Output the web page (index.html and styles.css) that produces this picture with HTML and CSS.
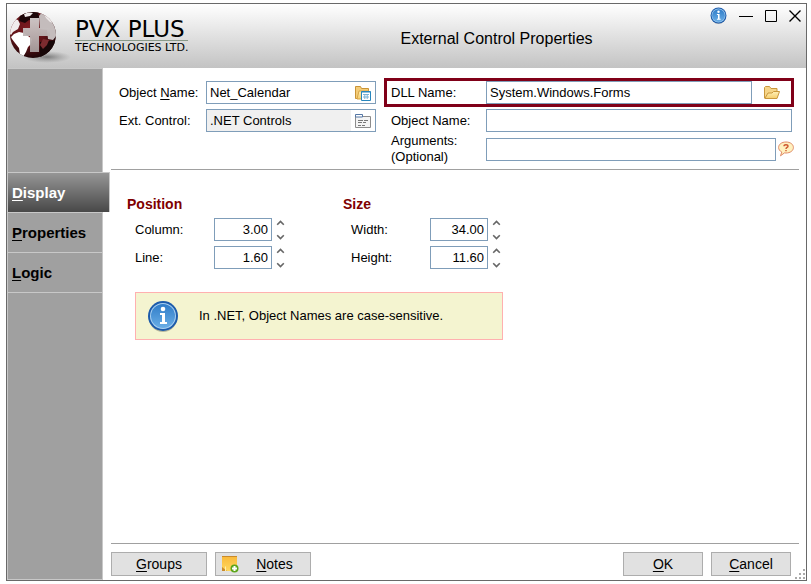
FILE: index.html
```html
<!DOCTYPE html>
<html lang="en">
<head>
  <meta charset="UTF-8">
  <meta name="viewport" content="width=device-width, initial-scale=1.0">
  <title>External Control Properties</title>
  <link rel="stylesheet" href="styles.css">
</head>
<body>
  <!-- Shared icon shapes -->
  <svg class="defs" width="0" height="0" aria-hidden="true">
    <defs>
      <linearGradient id="blue" x1="0" y1="0" x2="0" y2="1">
        <stop offset="0" stop-color="#2f7cc8"/>
        <stop offset="1" stop-color="#6aaee6"/>
      </linearGradient>
      <linearGradient id="gold" x1="0" y1="0" x2="0" y2="1">
        <stop offset="0" stop-color="#fff0b8"/>
        <stop offset="1" stop-color="#f5cd6c"/>
      </linearGradient>
      <linearGradient id="note" x1="0" y1="0" x2="0" y2="1">
        <stop offset="0" stop-color="#f9b93a"/>
        <stop offset="1" stop-color="#ffd75e"/>
      </linearGradient>
      <radialGradient id="sphere" cx="0.4" cy="0.35" r="0.65">
        <stop offset="0" stop-color="#7d1c21"/>
        <stop offset="0.6" stop-color="#5f1217"/>
        <stop offset="1" stop-color="#200507"/>
      </radialGradient>
      <radialGradient id="shadow">
        <stop offset="0" stop-color="#666" stop-opacity="0.8"/>
        <stop offset="1" stop-color="#888" stop-opacity="0"/>
      </radialGradient>
      <linearGradient id="cross" x1="0" y1="0" x2="0" y2="1">
        <stop offset="0" stop-color="#d2cccc"/>
        <stop offset="1" stop-color="#a79c9c"/>
      </linearGradient>
      <clipPath id="globe"><circle cx="26" cy="29" r="23"/></clipPath>
      <symbol id="info" viewBox="0 0 32 32">
        <ellipse cx="16" cy="18" rx="14" ry="14" fill="#000" opacity="0.25"/>
        <circle cx="16" cy="16" r="15" fill="#1c5bab"/>
        <circle cx="16" cy="16" r="13" fill="#a9d1f2"/>
        <circle cx="16" cy="16" r="12" fill="url(#blue)"/>
        <circle cx="16" cy="9" r="2.3" fill="#fff"/>
        <path d="M13 13h5v9h2v2h-7v-2h2v-7h-2z" fill="#fff"/>
      </symbol>
      <symbol id="up" viewBox="0 0 9 6"><path d="M1.2 4.8l3.3-3.3 3.3 3.3" fill="none" stroke="#666" stroke-width="1.6"/></symbol>
      <symbol id="down" viewBox="0 0 9 6"><path d="M1.2 1.2l3.3 3.3 3.3-3.3" fill="none" stroke="#666" stroke-width="1.6"/></symbol>
    </defs>
  </svg>

  <div class="window">
    <header class="titlebar">
      <div class="logo">
        <svg width="64" height="60" viewBox="0 0 64 60" aria-hidden="true">
          <ellipse cx="40" cy="51" rx="24" ry="6" fill="url(#shadow)"/>
          <circle cx="26" cy="29" r="23" fill="url(#sphere)"/>
          <g clip-path="url(#globe)">
            <path d="M13 9l6-4 9-2 7 2-4 3 2 4-5 3-6-1-4 3-6-2z" fill="#1c0608"/>
            <path d="M17 8l4-2 5 1-3 3-5 1zM4 19l4-6 3 1 2 4-2 5-5 3-2 3-3-3z" fill="#f0ecec"/>
            <path d="M7 28l5-2 5 1 4 3 4 3-1 5-3 3-2 5-3 5-3-2-1-7-4-5-3-4-1-2z" fill="#fff"/>
            <path d="M32 10l4-5 5 1 6 7 3 9 0 7-4 5-5-1-1-9-7-1z" fill="#c4bcbc"/>
            <path d="M37 8l5 2 5 7-4-1-4-4z" fill="#efebeb"/>
            <path d="M33 36l9-1 7 0-3 8-6 6-7 3z" fill="#170708"/>
            <path d="M36 33l6 1-2 5-4 4-3-4z" fill="#7c2b2f"/>
          </g>
          <path d="M23 12h9v10h11v8H32v16h-9V30h-7v-8h7z" fill="url(#cross)" opacity="0.95"/>
        </svg>
        <div class="brand">
          <span class="brand-name">PVX PLUS</span>
          <span class="brand-sub">TECHNOLOGIES LTD.</span>
        </div>
      </div>
      <h1>External Control Properties</h1>
      <div class="controls">
        <button type="button" aria-label="Information"><svg width="17" height="17"><use href="#info"/></svg></button>
        <button type="button" aria-label="Minimize"><svg width="14" height="14" viewBox="0 0 14 14"><path d="M0 7.5h14" stroke="#000"/></svg></button>
        <button type="button" aria-label="Maximize"><svg width="12" height="12" viewBox="0 0 12 12"><path d="M.5.5h11v11H.5z" fill="none" stroke="#000"/></svg></button>
        <button type="button" aria-label="Close"><svg width="12" height="12" viewBox="0 0 12 12"><path d="M.5.5l11 11M11.5.5l-11 11" stroke="#000" stroke-width="1.4"/></svg></button>
      </div>
    </header>

    <div class="body">
      <nav class="tabs">
        <a href="#display" class="active"><u>D</u>isplay</a>
        <a href="#properties"><u>P</u>roperties</a>
        <a href="#logic"><u>L</u>ogic</a>
      </nav>

      <form class="content">
        <div class="names">
          <div class="names-left">
            <div class="row">
              <label for="objectName">Object <u>N</u>ame:</label>
              <div class="field">
                <input type="text" id="objectName" value="Net_Calendar">
                <button type="button" aria-label="Browse objects">
                  <svg width="16" height="16" viewBox="0 0 16 16"><path d="M.5 13.5v-12h5l1 2h7v10z" fill="#f3cc78" stroke="#c99336"/><path d="M2 14l2-8h10v8z" fill="url(#gold)" stroke="#d7a547"/><path d="M6.5 6.5h9v9h-9z" fill="#fff" stroke="#2786bd"/><path d="M6.5 7h9" stroke="#2786bd"/><path d="M8 9.5h6M8 12h6M9.8 9v5M12.2 9v5" stroke="#7bb3d5" fill="none"/></svg>
                </button>
              </div>
            </div>
            <div class="row">
              <label for="extControl">Ext. Control:</label>
              <div class="field">
                <input type="text" id="extControl" value=".NET Controls" readonly>
                <button type="button" aria-label="Choose control">
                  <svg width="16" height="16" viewBox="0 0 16 16"><path d="M.5 3.5h15v11H.5z" fill="#f4f4f4" stroke="#8c8c8c"/><path d="M.5 1.5h7v2.5h-7z" fill="#fff" stroke="#5577a5"/><path d="M3 7.5h5M9 7.5h4M3 9.5h4M8 9.5h3M3 12.5h3M7 12.5h3" stroke="#777"/></svg>
                </button>
              </div>
            </div>
          </div>

          <div class="names-right">
            <div class="row highlight">
              <label for="dllName">DLL Name:</label>
              <input type="text" id="dllName" class="box" value="System.Windows.Forms">
              <button type="button" aria-label="Browse DLL">
                <svg width="16" height="13" viewBox="0 0 16 13"><path d="M.5 12V1.5l1-1h4l1.5 2h6v3" fill="#f6d588" stroke="#c9973d"/><path d="M.8 12.5L4 7h4l1.5-1.5h6L13 12.5z" fill="url(#gold)" stroke="#c9973d"/></svg>
              </button>
            </div>
            <div class="row second">
              <label for="netObject">Object Name:</label>
              <input type="text" id="netObject" class="box">
            </div>
            <div class="row third">
              <label for="arguments">Arguments:<br>(Optional)</label>
              <input type="text" id="arguments" class="box">
              <button type="button" class="help" aria-label="Help">
                <svg width="16" height="16" viewBox="0 0 16 16"><path d="M8 1c4.3 0 7.4 2.3 7.4 5.5S12.3 12 8 12c-.6 0-1 0-1.5-.1L2.5 14.8 3.8 11C1.7 10 .6 8.4.6 6.5.6 3.3 3.7 1 8 1z" fill="#fff1bf" stroke="#e08a66"/><path d="M6 5.300c0-1 .8-1.600 2-1.600s2 .6 2 1.500c0 1.200-2 1.300-2 2.700M8 9v1.300" fill="none" stroke="#cf5730" stroke-width="1.400"/></svg>
              </button>
            </div>
          </div>
        </div>

        <div class="panel">
          <div class="groups">
            <section>
              <h2>Position</h2>
              <div class="row">
                <label for="column">Column:</label>
                <input type="text" id="column" class="box" value="3.00">
                <div class="spin">
                  <button type="button" aria-label="Column up"><svg width="9" height="6"><use href="#up"/></svg></button>
                  <button type="button" aria-label="Column down"><svg width="9" height="6"><use href="#down"/></svg></button>
                </div>
              </div>
              <div class="row">
                <label for="line">Line:</label>
                <input type="text" id="line" class="box" value="1.60">
                <div class="spin">
                  <button type="button" aria-label="Line up"><svg width="9" height="6"><use href="#up"/></svg></button>
                  <button type="button" aria-label="Line down"><svg width="9" height="6"><use href="#down"/></svg></button>
                </div>
              </div>
            </section>
            <section>
              <h2>Size</h2>
              <div class="row">
                <label for="width">Width:</label>
                <input type="text" id="width" class="box" value="34.00">
                <div class="spin">
                  <button type="button" aria-label="Width up"><svg width="9" height="6"><use href="#up"/></svg></button>
                  <button type="button" aria-label="Width down"><svg width="9" height="6"><use href="#down"/></svg></button>
                </div>
              </div>
              <div class="row">
                <label for="height">Height:</label>
                <input type="text" id="height" class="box" value="11.60">
                <div class="spin">
                  <button type="button" aria-label="Height up"><svg width="9" height="6"><use href="#up"/></svg></button>
                  <button type="button" aria-label="Height down"><svg width="9" height="6"><use href="#down"/></svg></button>
                </div>
              </div>
            </section>
          </div>

          <div class="notice">
            <svg width="32" height="32" aria-hidden="true"><use href="#info"/></svg>
            <p>In .NET, Object Names are case-sensitive.</p>
          </div>
        </div>

        <footer>
          <button type="button" class="wide"><u>G</u>roups</button>
          <button type="button" class="wide with-icon">
            <svg width="18" height="18" viewBox="0 0 18 18" aria-hidden="true"><path d="M1 1h15v15H6l-5-1z" fill="url(#note)"/><path d="M1 1.5h15" stroke="#c98a2b"/><path d="M1 12l5 4H1z" fill="#c98a2b"/><path d="M4.5 11.5V16" stroke="#fff0b0"/><circle cx="13.5" cy="13.5" r="4" fill="#5da51c"/><path d="M13.5 11v5M11 13.5h5" stroke="#fff" stroke-width="2"/></svg>
            <span><u>N</u>otes</span>
          </button>
          <button type="submit" class="ok"><u>O</u>K</button>
          <button type="button"><u>C</u>ancel</button>
        </footer>
      </form>
    </div>
    <svg class="grip" width="10" height="10" viewBox="0 0 10 10" aria-hidden="true"><path d="M8 0h2v2H8zM4 4h2v2H4zM8 4h2v2H8zM0 8h2v2H0zM4 8h2v2H4zM8 8h2v2H8z" fill="#aaa"/></svg>
  </div>
</body>
</html>
```

FILE: styles.css
```css
* {
  box-sizing: border-box;
}
body {
  margin: 0;
  padding: 3px 4px 3px 6px;
  min-height: 100vh;
  display: flex;
  background: #fff;
  font-family: "Liberation Sans", Arial, sans-serif;
  font-size: 13px;
  line-height: 16px;
  color: #000;
}
.defs {
  position: absolute;
}
svg {
  display: block;
  flex: none;
}
h1, h2, p {
  margin: 0;
}
button {
  border: none;
  background: none;
  padding: 0;
  font: inherit;
  color: inherit;
  display: flex;
  align-items: center;
  justify-content: center;
}
u {
  text-underline-offset: 2px;
}

.window {
  position: relative;
  flex: 1;
  display: flex;
  flex-direction: column;
  border: 1px solid #696969;
}

/* Title bar */
.titlebar {
  position: relative;
  display: flex;
  height: 64px;
  background: linear-gradient(#fff, #c3c3c3);
}
.logo {
  display: flex;
  align-items: center;
  width: 180px;
}
.brand {
  display: flex;
  flex-direction: column;
  margin-left: 4px;
  font-family: "DejaVu Sans", sans-serif;
  white-space: nowrap;
}
.brand-name {
  font-size: 23px;
  line-height: 22px;
  border-bottom: 1px solid #8a9a8a;
}
.brand-sub {
  font-size: 11px;
  line-height: 14px;
}
h1 {
  flex: 1;
  align-self: center;
  padding-top: 6px;
  font-size: 16px;
  font-weight: normal;
  line-height: 20px;
  text-align: center;
}
.controls {
  position: absolute;
  top: 3px;
  right: 5px;
  display: flex;
  align-items: center;
  gap: 12px;
}

/* Tabs */
.body {
  flex: 1;
  display: flex;
}
.tabs {
  width: 96px;
  padding-top: 103px;
  background: #a0a0a0;
  border: 1px solid #c8c8c8;
}
.tabs a {
  display: block;
  height: 40px;
  padding-left: 4px;
  border-top: 1px solid #c8c8c8;
  font-size: 15px;
  font-weight: bold;
  line-height: 39px;
  color: #000;
  text-decoration: none;
}
.tabs a:last-child {
  height: 41px;
  border-bottom: 1px solid #c8c8c8;
}
.tabs .active {
  position: relative;
  margin-right: -8px;
  border-right: 1px solid #c8c8c8;
  background: linear-gradient(#969696, #484848);
  color: #fff;
}

/* Fields */
.content {
  flex: 1;
  display: flex;
  flex-direction: column;
  margin: 0 7px 0 8px;
}
.row {
  display: flex;
  align-items: center;
}
label {
  flex: none;
}
input {
  min-width: 0;
  height: 23px;
  padding: 0 3px;
  border: 1px solid #7f9db9;
  background: #fff;
  font: inherit;
  color: inherit;
}
.names {
  display: flex;
  gap: 8px;
  padding: 10px 5px 4px 8px;
  border-bottom: 1px solid #a0a0a0;
}
.names-left {
  display: flex;
  flex-direction: column;
  gap: 5px;
  width: 257px;
  padding-top: 3px;
}
.names-left label {
  width: 87px;
}
.field {
  flex: 1;
  min-width: 0;
  display: flex;
  height: 23px;
  border: 1px solid #7f9db9;
}
.field input {
  flex: 1;
  height: 21px;
  border: none;
}
.field input:read-only {
  background: #f0f0f0;
}
.field button {
  width: 24px;
}
.names-right {
  flex: 1;
}
.names-right label {
  width: 95px;
}
.names-right .box {
  flex: 1;
}
.highlight {
  padding-left: 4px;
  border: 3px solid #800018;
}
.highlight button {
  width: 39px;
}
.second {
  margin-top: 2px;
  padding: 0 2px 0 7px;
}
.third {
  margin-top: 1px;
  padding-left: 7px;
}
.help {
  margin-left: 2px;
}

/* Display tab */
.panel {
  flex: 1;
  padding: 26px 16px 0;
}
.groups {
  display: flex;
}
.groups section {
  width: 216px;
}
h2 {
  margin-bottom: 6px;
  font-size: 14px;
  line-height: 16px;
  color: #800000;
}
.groups .row {
  margin-bottom: 5px;
  padding-left: 8px;
}
.groups label {
  width: 79px;
}
.groups .box {
  width: 58px;
  text-align: right;
}
.spin {
  display: flex;
  flex-direction: column;
  gap: 8px;
  margin-left: 4px;
}
.notice {
  display: flex;
  align-items: center;
  gap: 20px;
  width: 368px;
  height: 48px;
  margin: 18px 8px 0;
  padding-left: 11px;
  border: 1px solid #ffb0b0;
  background: #f4f4d0;
}

/* Bottom buttons */
footer {
  display: flex;
  gap: 8px;
  padding: 8px 8px 4px 0;
  border-top: 1px solid #a0a0a0;
}
footer button {
  width: 80px;
  height: 24px;
  border: 1px solid #adadad;
  background: #e1e1e1;
  font-size: 14px;
}
footer .wide {
  width: 96px;
}
.with-icon {
  padding-left: 5px;
}
.with-icon span {
  flex: 1;
}
.ok {
  margin-left: auto;
}
.grip {
  position: absolute;
  right: 1px;
  bottom: 1px;
}
```
